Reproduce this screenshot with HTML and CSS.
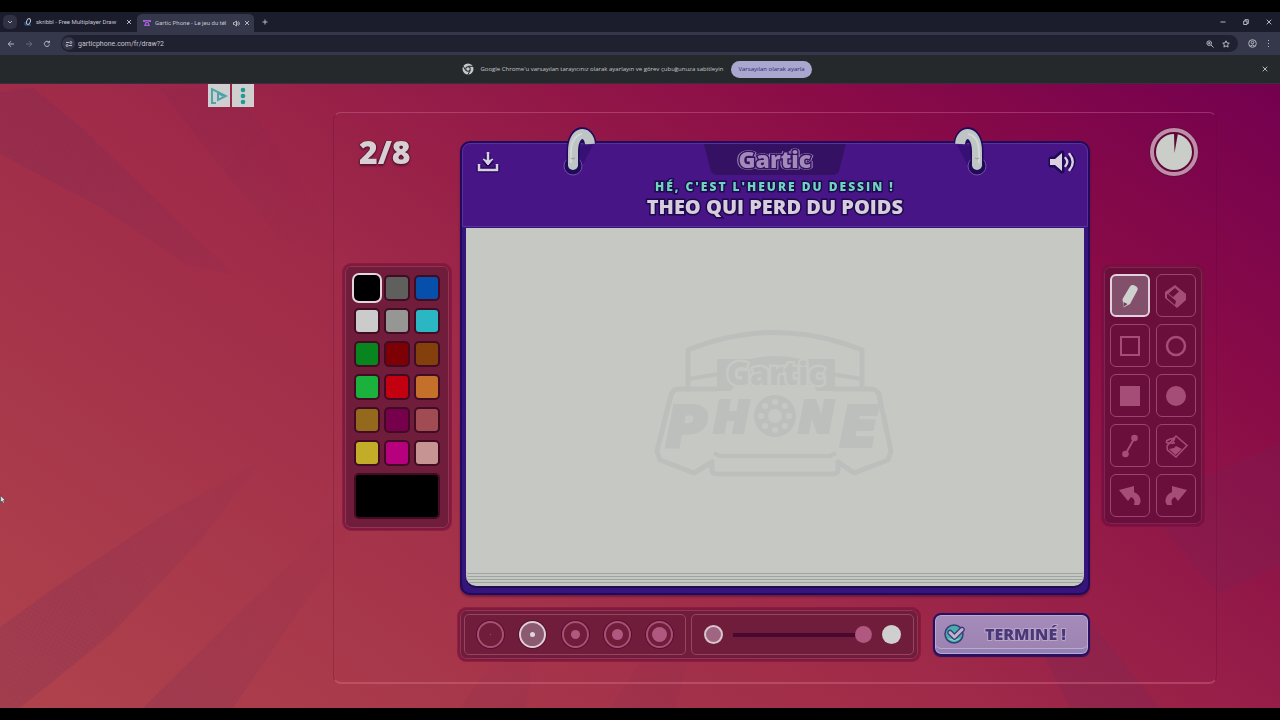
FILE: index.html
```
<!DOCTYPE html>
<html lang="fr">
<head>
    <meta charset="UTF-8">
    <meta name="viewport" content="width=device-width, initial-scale=1.0">
    <title>Gartic Phone</title>
    <link rel="stylesheet" href="styles.css">
</head>
<body>
    <header class="browser">
        <div class="tab-bar">
            <button class="tab-search" aria-label="Search tabs"><svg width="6" height="6" viewBox="0 0 6 6"><path d="M1 2l2 2 2-2"/></svg></button>
            <div class="tab">
                <svg class="favicon" width="8" height="8" viewBox="0 0 8 8"><path d="M1 4v3h6" stroke="#1c6fb8"/><ellipse cx="4.500" cy="3.500" rx="1.800" ry="3" transform="rotate(20 4.500 3.500)" stroke="#c3c6d2"/></svg>
                <span class="tab-title">skribbl - Free Multiplayer Draw</span>
                <button aria-label="Close tab"><svg width="6" height="6" viewBox="0 0 6 6"><path d="M1 1l4 4M5 1L1 5"/></svg></button>
            </div>
            <div class="tab active">
                <svg class="favicon" width="8" height="8" viewBox="0 0 8 8"><path d="M0 1h8v2H6V2.500H2V3H0zM2.500 3h3L7 7H1z" fill="#a45fd6"/><circle cx="4" cy="5" r="1" fill="#35374a"/></svg>
                <span class="tab-title">Gartic Phone - Le jeu du tél</span>
                <svg width="7" height="7" viewBox="0 0 7 7"><path d="M.5 2.500h1L3.500 1v5L1.500 4.500h-1zM4.500 2.500q1 1 0 2M5.500 1.500q2 2 0 4"/></svg>
                <button aria-label="Close tab"><svg width="6" height="6" viewBox="0 0 6 6"><path d="M1 1l4 4M5 1L1 5"/></svg></button>
            </div>
            <button class="new-tab" aria-label="New tab"><svg width="6" height="6" viewBox="0 0 6 6"><path d="M3 .5v5M.5 3h5"/></svg></button>
            <div class="window-buttons">
                <button aria-label="Minimize"><svg width="6" height="6" viewBox="0 0 6 6"><path d="M.5 3h5"/></svg></button>
                <button aria-label="Restore"><svg width="6" height="6" viewBox="0 0 6 6"><path d="M.7 2h3.300v3.500H.7zM2 2V.700h3.300V4.500H4"/></svg></button>
                <button aria-label="Close"><svg width="6" height="6" viewBox="0 0 6 6"><path d="M.7.7l4.600 4.600M5.300.7L.7 5.300"/></svg></button>
            </div>
        </div>
        <div class="toolbar">
            <button aria-label="Back"><svg width="8" height="8" viewBox="0 0 8 8"><path d="M7 4H1.200M4 1.200L1.200 4 4 6.800"/></svg></button>
            <button class="disabled" aria-label="Forward"><svg width="8" height="8" viewBox="0 0 8 8"><path d="M1 4h5.800M4 1.200L6.800 4 4 6.800"/></svg></button>
            <button aria-label="Reload"><svg width="8" height="8" viewBox="0 0 8 8"><path d="M6.500 4.500A2.600 2.600 0 1 1 6 2.200M6.500.8v2H4.500"/></svg></button>
            <div class="omnibox">
                <span class="site-info"><svg width="8" height="8" viewBox="0 0 8 8"><path d="M1 2.500h3M4 5.500h3"/><circle cx="5.800" cy="2.500" r="1"/><circle cx="2.200" cy="5.500" r="1"/></svg></span>
                <input class="url" type="text" aria-label="Address" value="garticphone.com/fr/draw?2">
                <button aria-label="Zoom"><svg width="8" height="8" viewBox="0 0 8 8"><circle cx="3.200" cy="3.200" r="2.300"/><path d="M5 5l2.500 2.500M2 3.200h2.400M3.200 2v2.400"/></svg></button>
                <button aria-label="Bookmark"><svg width="8" height="8" viewBox="0 0 8 8"><path d="M4 .8l1 2.200 2.300.2-1.700 1.600.5 2.300L4 5.900 1.900 7.100l.5-2.300L.7 3.200 3 3z"/></svg></button>
            </div>
            <button aria-label="Profile"><svg width="9" height="9" viewBox="0 0 9 9"><circle cx="4.500" cy="4.500" r="3.800"/><circle cx="4.500" cy="3.600" r="1.300"/><path d="M2.300 7q2.200-2 4.400 0"/></svg></button>
            <button aria-label="Menu"><svg width="3" height="9" viewBox="0 0 3 9"><path d="M1.500 1v1M1.500 4v1M1.500 7v1"/></svg></button>
        </div>
        <div class="info-bar">
            <svg class="chrome-logo" width="12" height="12" viewBox="0 0 12 12"><circle cx="6" cy="6" r="5.500" fill="#c4c6c8"/><circle cx="6" cy="6" r="2.700" fill="#25292c"/><circle cx="6" cy="6" r="1.800" fill="#c4c6c8"/><path d="M6 3.300h5M3.700 7.400L1.300 3.200M8.300 7.400l-2.400 4.200" stroke="#25292c"/></svg>
            <span class="info-text">Google Chrome'u varsayılan tarayıcınız olarak ayarlayın ve görev çubuğunuza sabitleyin</span>
            <button class="default-btn">Varsayılan olarak ayarla</button>
            <button class="info-close" aria-label="Dismiss"><svg width="6" height="6" viewBox="0 0 6 6"><path d="M.7.7l4.600 4.600M5.300.7L.7 5.300"/></svg></button>
        </div>
    </header>

    <main class="game">
        <svg class="rays" viewBox="0 0 1280 624" preserveAspectRatio="none" aria-hidden="true">
            <defs>
                <pattern id="dots" width="4" height="4" patternUnits="userSpaceOnUse" patternTransform="rotate(30)">
                    <rect width="4" height="4" fill="#6b2a58" opacity=".17"/>
                    <circle cx="2" cy="2" r="1" fill="#6b2a58" opacity=".12"/>
                </pattern>
                <radialGradient id="fade" gradientUnits="userSpaceOnUse" cx="520" cy="300" r="560">
                    <stop offset=".4" stop-color="#000"/>
                    <stop offset=".9" stop-color="#fff"/>
                </radialGradient>
                <mask id="outer" maskUnits="userSpaceOnUse" x="0" y="0" width="1280" height="624">
                    <rect width="1280" height="624" fill="url(#fade)"/>
                </mask>
            </defs>
            <g fill="url(#dots)" mask="url(#outer)">
                <path d="M0 8l33-4 50 41 67 65 83 80-46-10-87-57L0 70z"/>
                <path opacity=".7" d="M160 4h73l34 45 60 90 20 50-70-38-77-94z"/>
                <path d="M0 543l57-41 110-73 93-51-60 79-90 94-90 73H0z"/>
                <path d="M143 624l90-89 94-90 60-55-60 96-94 138z"/>
                <path d="M460 624l30-42 44-16-8 58zM610 624l34-52 50-24-18 76z"/>
                <path d="M1030 545l60-8 70 87h-90zM1140 420l140-60v120l-60 30z"/>
            </g>
        </svg>

        <aside class="ad">
            <button aria-label="AdChoices"><svg width="18" height="18" viewBox="0 0 18 18"><path d="M6 16H2V2l14 7-8 4V6l5 3" fill="none" stroke="#4fa3ad" stroke-width="2"/></svg></button>
            <button aria-label="Ad options"><svg width="6" height="18" viewBox="0 0 6 18" fill="#1f9b96"><circle cx="3" cy="3" r="2.300"/><circle cx="3" cy="9" r="2.300"/><circle cx="3" cy="15" r="2.300"/></svg></button>
        </aside>

        <section class="panel">
            <div class="side">
                <div class="counter">2/8</div>
                <div class="palette">
                    <input type="radio" name="color" class="c-black" aria-label="Noir" checked>
                    <input type="radio" name="color" class="c-gray" aria-label="Gris foncé">
                    <input type="radio" name="color" class="c-blue" aria-label="Bleu">
                    <input type="radio" name="color" class="c-white" aria-label="Blanc">
                    <input type="radio" name="color" class="c-silver" aria-label="Gris">
                    <input type="radio" name="color" class="c-cyan" aria-label="Cyan">
                    <input type="radio" name="color" class="c-green" aria-label="Vert foncé">
                    <input type="radio" name="color" class="c-maroon" aria-label="Bordeaux">
                    <input type="radio" name="color" class="c-brown" aria-label="Marron">
                    <input type="radio" name="color" class="c-lime" aria-label="Vert">
                    <input type="radio" name="color" class="c-red" aria-label="Rouge">
                    <input type="radio" name="color" class="c-orange" aria-label="Orange">
                    <input type="radio" name="color" class="c-ochre" aria-label="Ocre">
                    <input type="radio" name="color" class="c-purple" aria-label="Violet">
                    <input type="radio" name="color" class="c-rose" aria-label="Rose foncé">
                    <input type="radio" name="color" class="c-yellow" aria-label="Jaune">
                    <input type="radio" name="color" class="c-magenta" aria-label="Magenta">
                    <input type="radio" name="color" class="c-pink" aria-label="Rose">
                    <input type="color" class="custom-color" aria-label="Couleur personnalisée" value="#000000">
                </div>
            </div>

            <div class="center">
                <div class="board">
                    <div class="board-head">
                        <button class="head-btn" aria-label="Télécharger">
                            <svg width="24" height="24" viewBox="0 0 24 24"><path d="M12 4v9M8 10l4 4 4-4M3 15v5h18v-5" fill="none" stroke="#1d0a55" stroke-width="5" stroke-linejoin="round"/><path d="M12 2v9M3 14v6h18v-6" fill="none" stroke="#dccfe2" stroke-width="2.500"/><path d="M7 9l5 2 5-2-5 6z" fill="#dccfe2" stroke="#dccfe2" stroke-linejoin="round"/></svg>
                        </button>
                        <div class="titles">
                            <div class="brand"><span>Gartic</span></div>
                            <h2>Hé, c'est l'heure du dessin !</h2>
                            <h1>THEO QUI PERD DU POIDS</h1>
                        </div>
                        <button class="head-btn" aria-label="Son">
                            <svg width="28" height="24" viewBox="0 0 28 24"><g stroke="#1d0a55" stroke-width="5" fill="none" stroke-linejoin="round"><path d="M3 9h4l7-6v18l-7-6H3z"/><path d="M18 8q3 4 0 8M22 5q6 7 0 14"/></g><path d="M2 9h5l7-6v18l-7-6H2z" fill="#dccfe2"/><path d="M17.500 8q3.500 4 0 8M21.500 4q6.500 8 0 16" fill="none" stroke="#dccfe2" stroke-width="2.400" stroke-linecap="round"/></svg>
                        </button>
                    </div>
                    <svg class="ring ring-left" width="34" height="52" viewBox="0 0 34 52"><path d="M31 19L19 42l-3-22z" fill="#371074"/><circle cx="11" cy="40" r="9" fill="#1f0a5c" stroke="#7450a0" stroke-width="1"/><path d="M11 39V26C11 2 27 4 28 18" fill="none" stroke="#1f0a5c" stroke-width="13"/><circle cx="11" cy="39" r="5" fill="#bfc5c5"/><path d="M11 40V26C11 3 27 4 28 18" fill="none" stroke="#bfc5c5" stroke-width="10"/><path d="M9 37V26C9 16 13 9 20 8" fill="none" stroke="#d2d7d5" stroke-width="2"/><path d="M13 32q-2 2-4 0" fill="none" stroke="#8f989e" stroke-width="1"/></svg>
                    <svg class="ring ring-right" width="34" height="52" viewBox="0 0 34 52"><g transform="translate(34 0) scale(-1 1)"><path d="M31 19L19 42l-3-22z" fill="#371074"/><circle cx="11" cy="40" r="9" fill="#1f0a5c" stroke="#7450a0" stroke-width="1"/><path d="M11 39V26C11 2 27 4 28 18" fill="none" stroke="#1f0a5c" stroke-width="13"/><circle cx="11" cy="39" r="5" fill="#bfc5c5"/><path d="M11 40V26C11 3 27 4 28 18" fill="none" stroke="#bfc5c5" stroke-width="10"/><path d="M9 37V26C9 16 13 9 20 8" fill="none" stroke="#d2d7d5" stroke-width="2"/><path d="M13 32q-2 2-4 0" fill="none" stroke="#8f989e" stroke-width="1"/></g></svg>
                    <div class="paper">
                        <svg class="watermark" width="248" height="148" viewBox="0 0 248 148">
                            <g fill="none" stroke="#bcbfbb" stroke-width="5" stroke-linejoin="round">
                                <path d="M37 58V21Q124-14 211 21v37"/>
                                <path d="M37 50l31-5M211 50l-31-5" stroke-width="4"/>
                                <path d="M66 60H28q-6 0-8 6L6 122l3 9 34 13 18-11v8q0 4 6 4h114q6 0 6-4v-8l16 11 34-13 3-9-12-56q-2-6-8-6h-38"/>
                                <path d="M63 124l6 3h110l6-3" stroke-width="4"/>
                            </g>
                            <path d="M66 30h32q26-6 52 0h34v32h-18l-4-6H84l-4 6H66z" fill="#bcbfbb"/>
                            <text class="mark-name" x="125" y="56" text-anchor="middle">Gartic</text>
                            <g class="mark-word">
                                <text x="15" y="117" font-size="56">P</text>
                                <text x="63" y="103" font-size="42">H</text>
                                <text x="148" y="103" font-size="42">N</text>
                                <text x="189" y="117" font-size="56">E</text>
                            </g>
                            <circle cx="124" cy="87" r="21" fill="#bcbfbb"/>
                            <g fill="#c6c8c4"><circle cx="124" cy="87" r="7"/><circle cx="124" cy="73" r="3"/><circle cx="134" cy="77" r="3"/><circle cx="138" cy="87" r="3"/><circle cx="134" cy="97" r="3"/><circle cx="124" cy="101" r="3"/><circle cx="114" cy="97" r="3"/><circle cx="110" cy="87" r="3"/><circle cx="114" cy="77" r="3"/></g>
                        </svg>
                        <div class="sheets"><i></i><i></i><i></i><i></i></div>
                    </div>
                </div>

                <div class="footer">
                    <div class="options">
                        <div class="sizes">
                            <button class="dot-1" aria-label="Taille 1"></button>
                            <button class="dot-2 selected" aria-label="Taille 2"></button>
                            <button class="dot-3" aria-label="Taille 3"></button>
                            <button class="dot-4" aria-label="Taille 4"></button>
                            <button class="dot-5" aria-label="Taille 5"></button>
                        </div>
                        <div class="opacity">
                            <span class="see-through"></span>
                            <input type="range" min="0" max="100" value="100" aria-label="Opacité">
                            <span class="opaque"></span>
                        </div>
                    </div>
                    <button class="done">
                        <svg width="22" height="22" viewBox="0 0 22 22"><circle cx="10" cy="11" r="9" fill="#43b0ac" stroke="#3c3c78" stroke-width="1.500"/><path d="M3 15q7 6 14 0-7 2-14 0z" fill="#7ed4c8"/><path d="M6 9.500l4.500 4.500L18 6.500" fill="none" stroke="#3c3c78" stroke-width="5.500" stroke-linecap="round" stroke-linejoin="round"/><path d="M6 9.500l4.500 4.500L18 6.500" fill="none" stroke="#c3b2cf" stroke-width="3" stroke-linecap="round" stroke-linejoin="round"/></svg>
                        <span>TERMINÉ !</span>
                    </button>
                </div>
            </div>

            <div class="side">
                <div class="clock">
                    <svg width="50" height="50" viewBox="0 0 50 50"><circle cx="25" cy="25" r="22.500" fill="#5c0834" stroke="#5f1038" stroke-width="5"/><circle cx="25" cy="25" r="22" fill="none" stroke="#c18bab" stroke-width="4"/><circle cx="25" cy="25" r="18" fill="#cbcdc9"/><path d="M25.500 26L25 6h4z" fill="#5c0834"/></svg>
                </div>
                <div class="tools">
                    <button class="selected" aria-label="Crayon"><svg width="24" height="24" viewBox="0 0 24 24"><path d="M4.500 15L12 2.500q2-2.500 5.500-.5t1.500 5L12 20l-6.500 3.500z" fill="#cfd1ce"/><path d="M5.500 18l4 2-4 3z" fill="#71405b"/></svg></button>
                    <button aria-label="Gomme"><svg width="24" height="24" viewBox="0 0 24 24"><path d="M11 1l11 9v6l-9 8L1 14V8z" fill="#a64d77"/><path d="M11 4l4 3.500L9 13 4.500 9.500zM3 10.500l1-.5 8 7-1 4-8-7z" fill="#6a0f3b"/></svg></button>
                    <button aria-label="Rectangle"><svg width="24" height="24" viewBox="0 0 24 24"><path d="M3 3h18v18H3z" fill="none" stroke="#a64d77" stroke-width="2"/></svg></button>
                    <button aria-label="Ellipse"><svg width="24" height="24" viewBox="0 0 24 24"><circle cx="12" cy="12" r="9" fill="none" stroke="#a64d77" stroke-width="2.500"/></svg></button>
                    <button aria-label="Rectangle plein"><svg width="24" height="24" viewBox="0 0 24 24"><path d="M2 2h20v20H2z" fill="#a64d77"/></svg></button>
                    <button aria-label="Ellipse pleine"><svg width="24" height="24" viewBox="0 0 24 24"><circle cx="12" cy="12" r="10" fill="#a64d77"/></svg></button>
                    <button aria-label="Ligne"><svg width="24" height="24" viewBox="0 0 24 24" fill="#a64d77"><circle cx="16.500" cy="4" r="3.300"/><circle cx="7.500" cy="20" r="3.300"/><path d="M16.500 4l-9 16" stroke="#a64d77" stroke-width="2"/></svg></button>
                    <button aria-label="Remplir"><svg width="24" height="24" viewBox="0 0 24 24"><path d="M12 2l11 9.500L12 23l-8.500-7L3 12z" fill="none" stroke="#a64d77" stroke-width="1.500"/><path d="M5 15l5-1 2-2 6 3-6.500 6z" fill="#a64d77"/><path d="M11 9L3 9q-3-3 8-5M11 4l-3 6" fill="none" stroke="#a64d77" stroke-width="1.500"/></svg></button>
                    <button aria-label="Annuler"><svg width="24" height="24" viewBox="0 0 24 24"><path d="M1 6l15-4v6q7 3 6.500 10l-1.500 3h-5q2-6-3-8l-3 4z" fill="#a64d77"/></svg></button>
                    <button aria-label="Rétablir"><svg width="24" height="24" viewBox="0 0 24 24"><path d="M23 6L8 2v6q-7 3-6.500 10L3 21h5q-2-6 3-8l3 4z" fill="#a64d77"/></svg></button>
                </div>
            </div>
        </section>

        <svg class="cursor" width="6" height="9" viewBox="0 0 6 9"><path d="M.5.500v7L2 6l1.500 2.500 1-.5L3.500 5.500h2z" fill="#dcdcdc" stroke="#333" stroke-width=".5"/></svg>
    </main>
</body>
</html>
```
FILE: styles.css
```
* {
    box-sizing: border-box;
}

body {
    margin: 0;
    padding: 12px 0;
    min-height: 100vh;
    display: flex;
    flex-direction: column;
    background: #000;
    font-family: "Open Sans", "Noto Sans", sans-serif;
    overflow: hidden;
}

button {
    padding: 0;
    border: none;
    background: none;
    font-family: inherit;
    cursor: pointer;
    display: flex;
    align-items: center;
    justify-content: center;
}

svg {
    display: block;
    flex: none;
}

/* Browser chrome */
.browser {
    font-size: 6px;
    line-height: 8px;
    color: #c3c5ce;
}

.browser svg {
    fill: none;
    stroke: #b4b7c2;
    stroke-width: 1;
}

.browser .favicon,
.browser .chrome-logo {
    stroke: none;
}

.tab-bar {
    height: 20px;
    padding: 0 8px 0 3px;
    display: flex;
    align-items: center;
    background: #1c1d2c;
}

.tab-search {
    width: 14px;
    height: 14px;
    border-radius: 5px;
    background: #303243;
}

.tab {
    width: 120px;
    height: 20px;
    padding: 0 5px 0 7px;
    display: flex;
    align-items: center;
    gap: 4px;
}

.tab.active {
    width: 117px;
    padding: 0 4px 0 6px;
    background: #35374a;
    border-top: 2px solid #1c1d2c;
    border-radius: 6px 6px 0 0;
}

.tab-title {
    flex: 1;
    font-family: Roboto, sans-serif;
    white-space: nowrap;
}

.new-tab {
    margin-left: 8px;
}

.window-buttons {
    margin-left: auto;
    display: flex;
    gap: 17px;
}

.toolbar {
    height: 23px;
    padding: 0 10px 0 7px;
    display: flex;
    align-items: center;
    gap: 10px;
    background: #35374a;
}

.toolbar .disabled {
    opacity: .4;
}

.omnibox {
    flex: 1;
    height: 17px;
    padding: 0 8px 0 1px;
    display: flex;
    align-items: center;
    gap: 8px;
    border-radius: 9px;
    background: #1f2130;
}

.site-info {
    width: 13px;
    height: 13px;
    display: flex;
    align-items: center;
    justify-content: center;
    border-radius: 50%;
    background: #35374a;
}

.url {
    flex: 1;
    margin-left: -5px;
    padding: 0;
    border: none;
    outline: none;
    background: none;
    color: #c3c5ce;
    font: 7px Roboto, sans-serif;
}

.info-bar {
    height: 29px;
    padding: 0 12px;
    display: flex;
    align-items: center;
    background: #25292c;
    border-bottom: 1px solid #3d2d40;
}

.chrome-logo {
    margin-left: auto;
    margin-right: 6px;
}

.default-btn {
    height: 17px;
    margin-left: 8px;
    padding: 0 7px;
    border-radius: 9px;
    background: #a9a6d0;
    color: #2c2a66;
    font-size: 6px;
}

.info-close {
    margin-left: auto;
}

/* Game */
.game {
    flex: 1;
    position: relative;
    display: flex;
    padding: 0 63px 24px 0;
    background: linear-gradient(35deg, #af434c 0%, #9f2a49 45%, #8a0c47 78%, #74004f 100%);
}

.rays {
    position: absolute;
    inset: 0;
    width: 100%;
    height: 100%;
}

.ad {
    flex: 0 0 26vw;
    padding-right: 79px;
    display: flex;
    justify-content: flex-end;
    align-items: flex-start;
    gap: 2px;
    position: relative;
}

.ad button {
    width: 22px;
    height: 23px;
    background: #cfcfcf;
}

.panel {
    flex: 1;
    margin-top: 28px;
    padding: 14px 0 21px;
    position: relative;
    display: grid;
    grid-template-columns: 126px 1fr 126px;
    border: 1px solid rgba(90, 10, 50, .25);
    border-top-color: rgba(220, 130, 170, .35);
    border-bottom: 2px solid rgba(220, 130, 150, .35);
    border-radius: 8px;
}

.side {
    display: flex;
    flex-direction: column;
    align-items: center;
}

.counter {
    height: 50px;
    margin-right: 24px;
    color: #d6d0d2;
    font-size: 32px;
    font-weight: 800;
    line-height: 50px;
    text-shadow: 0 2px 2px #5c1236, 1px 0 1px #5c1236, -1px 0 1px #5c1236;
}

.clock {
    height: 50px;
    margin-left: 42px;
}

.palette,
.tools,
.options {
    border: 2px solid #83183f;
    outline: 1px solid rgba(110, 16, 56, .5);
    border-radius: 8px;
    background: #701c3b;
    box-shadow: inset 0 0 0 1px #8f3556;
}

.palette {
    margin-top: 87px;
    padding: 9px;
    display: grid;
    grid-template-columns: repeat(3, 26px);
    grid-template-rows: repeat(6, 26px) 46px;
    gap: 7px 4px;
}

.palette input {
    appearance: none;
    width: 26px;
    height: 26px;
    margin: 0;
    padding: 0;
    border: 2px solid #420b24;
    border-radius: 5px;
    cursor: pointer;
}

.palette input:checked {
    border: none;
    box-shadow: 0 0 0 2px #e4d5dc;
}

.palette .custom-color {
    grid-column: 1 / -1;
    width: 100%;
    height: 100%;
    background: #000;
}

.custom-color::-webkit-color-swatch-wrapper {
    padding: 0;
}

.custom-color::-webkit-color-swatch {
    border: none;
}

.c-black { background: #000; }
.c-gray { background: #5f605d; }
.c-blue { background: #0650ac; }
.c-white { background: #cbcbcb; }
.c-silver { background: #969795; }
.c-cyan { background: #2bb6c4; }
.c-green { background: #08851f; }
.c-maroon { background: #7c0004; }
.c-brown { background: #83400d; }
.c-lime { background: #1bb13d; }
.c-red { background: #c2000f; }
.c-orange { background: #c4702a; }
.c-ochre { background: #94691e; }
.c-purple { background: #77004c; }
.c-rose { background: #a14c52; }
.c-yellow { background: #c3ad28; }
.c-magenta { background: #b6007e; }
.c-pink { background: #c79494; }

.center {
    display: flex;
    flex-direction: column;
    gap: 13px;
}

.board {
    flex: 1;
    margin-top: 14px;
    position: relative;
    display: flex;
    flex-direction: column;
    border: 2px solid #1f0a5c;
    border-radius: 10px;
    background: #35147c;
    box-shadow: 0 2px 2px rgba(70, 10, 50, .5);
}

.board-head {
    height: 84px;
    padding: 0 11px;
    display: flex;
    justify-content: space-between;
    align-items: flex-start;
    border: 1px solid #5c3099;
    border-radius: 8px 8px 0 0;
    background: #481586;
}

.head-btn {
    width: 28px;
    height: 24px;
    margin-top: 6px;
}

.titles {
    display: flex;
    flex-direction: column;
    align-items: center;
}

.brand {
    width: 142px;
    height: 31px;
    display: flex;
    justify-content: center;
    background: #351164;
    clip-path: polygon(0 0, 100% 0, 95% 90%, 92% 100%, 8% 100%, 5% 90%);
}

.brand span {
    font-size: 23px;
    font-weight: 800;
    line-height: 30px;
    color: #a38bb9;
    -webkit-text-stroke: 3px #351164;
    paint-order: stroke fill;
    filter: drop-shadow(1px 0 0 #a38bb9) drop-shadow(-1px 0 0 #a38bb9);
}

.titles h2,
.titles h1 {
    margin: 0;
    font-weight: 800;
    -webkit-text-stroke: 3px #1d0a4e;
    paint-order: stroke fill;
    white-space: nowrap;
}

.titles h2 {
    margin-top: 3px;
    color: #6fd3c0;
    font-size: 12px;
    line-height: 18px;
    letter-spacing: 2px;
    text-transform: uppercase;
}

.titles h1 {
    color: #d8cddd;
    font-size: 20px;
    line-height: 22px;
}

.ring {
    position: absolute;
    top: -17px;
}

.ring-left {
    left: 100px;
}

.ring-right {
    right: 100px;
}

.paper {
    flex: 1;
    margin: 1px 4px 7px;
    padding-top: 6px;
    display: flex;
    flex-direction: column;
    align-items: center;
    justify-content: flex-end;
    border-radius: 0 0 10px 10px;
    background: #c6c8c4;
    box-shadow: 0 2px 0 #1c1048;
    overflow: hidden;
}

.watermark {
    margin: auto;
}

.mark-name {
    font: 800 31px "Open Sans", sans-serif;
    fill: #bcbfbb;
    stroke: #c6c8c4;
    stroke-width: 5px;
    paint-order: stroke;
}

.mark-word {
    font-family: "DejaVu Sans", sans-serif;
    font-weight: 700;
    font-style: italic;
    fill: #bcbfbb;
    stroke: #bcbfbb;
    stroke-width: 4px;
}

.sheets {
    width: 100%;
    padding-bottom: 3px;
}

.sheets i {
    display: block;
    height: 3px;
    border-bottom: 1px solid #9da5a1;
    border-radius: 0 0 8px 8px;
}

.footer {
    margin-left: -2px;
    display: flex;
    align-items: center;
    gap: 13px;
}

.options {
    flex: 1;
    height: 53px;
    padding: 4px;
    display: flex;
    gap: 5px;
}

.sizes,
.opacity {
    flex: 1;
    display: flex;
    align-items: center;
    border: 1px solid #984461;
    border-radius: 5px;
}

.sizes {
    padding: 0 12px;
    justify-content: space-between;
}

.sizes button {
    width: 27px;
    height: 27px;
    border: 2px solid #a84f74;
    border-radius: 50%;
    box-shadow: 0 0 0 1px #57102f;
}

.sizes button::before {
    content: "";
    border-radius: 50%;
    background: #b0587f;
}

.sizes .selected {
    background: #8c5a70;
    border-color: #e0cdd5;
}

.sizes .selected::before {
    background: #e0d5da;
}

.dot-1::before { width: 1px; height: 1px; }
.dot-2::before { width: 5px; height: 5px; }
.dot-3::before { width: 9px; height: 9px; }
.dot-4::before { width: 11px; height: 11px; }
.dot-5::before { width: 15px; height: 15px; }

.opacity {
    padding: 0 12px;
    gap: 10px;
}

.see-through,
.opaque {
    flex: none;
    width: 19px;
    height: 19px;
    border-radius: 50%;
    background: #cfcfcf;
}

.see-through {
    background: #a06580;
    border: 2px solid #d6c6ce;
}

.opacity input {
    appearance: none;
    flex: 1;
    min-width: 0;
    height: 17px;
    margin: 0;
    background: linear-gradient(#48082f, #48082f) center / 100% 4px no-repeat;
}

.opacity input::-webkit-slider-thumb {
    appearance: none;
    width: 17px;
    height: 17px;
    border-radius: 50%;
    background: #b0587f;
}

.done {
    width: 157px;
    height: 43px;
    padding: 0 22px 2px 9px;
    justify-content: space-between;
    border: 2px solid #271060;
    border-radius: 8px;
    background: linear-gradient(#a58bb9, #9c82b0);
    box-shadow: inset 0 0 0 1px #bda9cd, inset 0 -5px 0 #9080b4, inset 0 -6px 0 #bda9cd, 0 1px 1px #271060;
}

.done span {
    color: #4b3879;
    font-size: 16px;
    font-weight: 800;
    -webkit-text-stroke: 2px #b9a6c9;
    paint-order: stroke fill;
}

.tools {
    margin-top: 88px;
    padding: 7px 6px;
    display: grid;
    grid-template-columns: repeat(2, 40px);
    grid-auto-rows: 43px;
    gap: 7px 6px;
    background: #6a0f3b;
    border-color: #790f42;
    box-shadow: inset 0 0 0 1px #81244f;
}

.tools button {
    border: 1px solid #9a4470;
    border-radius: 6px;
}

.tools .selected {
    background: #82506a;
    border: 2px solid #e3d2db;
}

.cursor {
    position: absolute;
    left: 0;
    top: 411px;
}
```
